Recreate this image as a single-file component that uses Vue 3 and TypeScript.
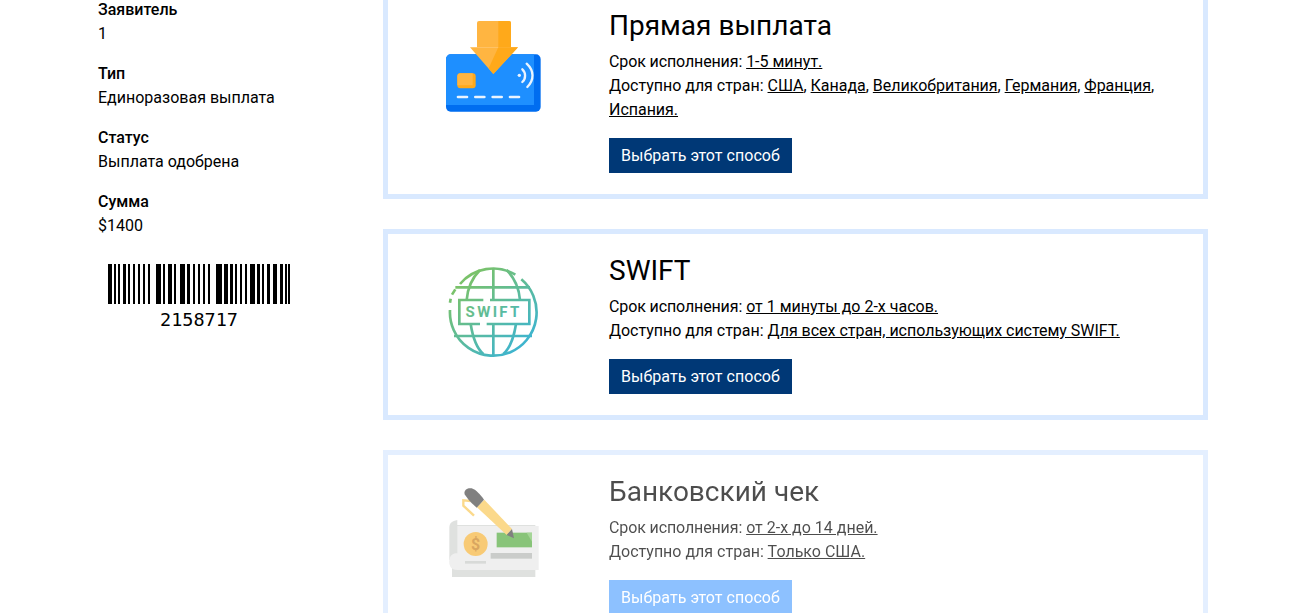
<script setup lang="ts">
interface Field {
  label: string
  value: string
}

const fields: Field[] = [
  { label: 'Заявитель', value: '1' },
  { label: 'Тип', value: 'Единоразовая выплата' },
  { label: 'Статус', value: 'Выплата одобрена' },
  { label: 'Сумма', value: '$1400' },
]

// barcode bars as [start, end] pixel columns
const bars: [number, number][] = [
  [0, 4], [6, 8], [10, 12], [15, 18], [20, 22], [25, 27], [30, 32], [35, 37], [40, 42],
  [48, 53], [55, 57], [60, 64], [66, 68], [72, 77], [79, 82], [85, 87], [90, 92], [95, 97],
  [100, 102], [108, 114], [116, 120], [122, 125], [127, 129], [132, 134], [137, 139],
  [142, 147], [149, 152], [154, 156], [159, 162], [165, 169], [172, 175], [177, 179], [180, 182],
]
const barcodeWidth = 182
</script>

<template>
  <div class="page">
    <aside class="sidebar">
      <div v-for="f in fields" :key="f.label" class="field">
        <div class="field-label">{{ f.label }}</div>
        <div class="field-value">{{ f.value }}</div>
      </div>
      <div class="barcode">
        <svg :width="barcodeWidth" height="40" :viewBox="`0 0 ${barcodeWidth} 40`" shape-rendering="crispEdges">
          <rect v-for="b in bars" :key="b[0]" :x="b[0]" y="0" :width="b[1] - b[0]" height="40" fill="#000" />
        </svg>
        <div class="barcode-text">2158717</div>
      </div>
    </aside>

    <main class="methods">
      <section class="method">
        <div class="method-icon">
          <svg width="130" height="130" viewBox="0 0 390 390">
            <rect x="48" y="163" width="284" height="172" rx="14" fill="#006df0" />
            <path d="M62 163H312V315H48V177a14 14 0 0 1 14-14z" fill="#1e8fff" />
            <rect x="82" y="220" width="55" height="45" rx="9" fill="#ffa91a" />
            <path d="M91 220H128V256H82V229a9 9 0 0 1 9-9z" fill="#ffb541" />
            <g fill="#eaf4ff">
              <rect x="80" y="287" width="35" height="8" rx="4" />
              <rect x="132" y="287" width="35" height="8" rx="4" />
              <rect x="184" y="287" width="35" height="8" rx="4" />
              <rect x="236" y="287" width="35" height="8" rx="4" />
              <circle cx="268" cy="226" r="5" />
            </g>
            <g fill="none" stroke="#eaf4ff" stroke-width="7" stroke-linecap="round">
              <path d="M277 208C288 218 288 236 277 246" />
              <path d="M290 191C313 212 313 240 292 261" />
            </g>
            <path d="M147 63H237a6 6 0 0 1 6 6V142H141V69a6 6 0 0 1 6-6z" fill="#ffb541" />
            <path d="M205 63H237a6 6 0 0 1 6 6V142H205z" fill="#ffa91a" />
            <path d="M120 142H264L190 222z" fill="#ffb541" />
            <path d="M205 142H264L190 222L176 205z" fill="#ffa91a" />
          </svg>
        </div>
        <div class="method-body">
          <h3 class="method-title">Прямая выплата</h3>
          <p class="method-line"><span class="term">Срок исполнения:</span> <a href="#">1-5 минут.</a></p>
          <p class="method-line method-line--tight">Доступно для стран: <a href="#">США</a>, <a href="#">Канада</a>, <a href="#">Великобритания</a>, <a href="#">Германия</a>, <a href="#">Франция</a>, <a href="#">Испания.</a></p>
          <button class="method-btn" type="button">Выбрать этот способ</button>
        </div>
      </section>

      <section class="method">
        <div class="method-icon">
          <svg width="130" height="130" viewBox="0 -15 390 390">
            <defs>
              <linearGradient id="swiftGrad" gradientUnits="userSpaceOnUse" x1="110" y1="90" x2="280" y2="290">
                <stop offset="0" stop-color="#7ac26a" />
                <stop offset="1" stop-color="#3db4d0" />
              </linearGradient>
            </defs>
            <g fill="none" stroke="url(#swiftGrad)" stroke-width="8">
              <path d="M256 74A130 130 0 0 0 90 102" />
              <path d="M76 118L66 134" />
              <path d="M62 146L60 158" />
              <path d="M60 180A130 130 0 1 0 274 88" />
              <path d="M190 55V150M190 222V315" />
              <path d="M150 60C120 90 112 125 110 150M230 60C260 90 268 125 270 150" />
              <path d="M122 222C128 260 140 295 160 312M258 222C252 260 240 295 220 312" />
              <path d="M76 112H300" />
              <path d="M72 258H306" />
              <path d="M160 150H88V222H150M170 222H298V150H180" />
            </g>
            <text x="191" y="201" class="swift-text" fill="url(#swiftGrad)" text-anchor="middle">SWIFT</text>
          </svg>
        </div>
        <div class="method-body">
          <h3 class="method-title">SWIFT</h3>
          <p class="method-line"><span class="term">Срок исполнения:</span> <a href="#">от 1 минуты до 2-х часов.</a></p>
          <p class="method-line method-line--tight">Доступно для стран: <a href="#">Для всех стран, использующих систему SWIFT.</a></p>
          <button class="method-btn" type="button">Выбрать этот способ</button>
        </div>
      </section>

      <section class="method method--disabled">
        <div class="method-icon">
          <svg width="130" height="130" viewBox="0 -27 390 390">
            <rect x="66" y="150" width="250" height="156" fill="#d2d4d2" />
            <path d="M82 135C66 138 58 145 58 158V255L82 240z" fill="#d2d4d2" />
            <path d="M82 153H326V285H82C62 285 56 270 58 255C60 240 70 235 82 235z" fill="#e8e8e8" />
            <rect x="200" y="173" width="106" height="44" fill="#55ab3f" />
            <path d="M290 173H306V200z" fill="#7fc46a" />
            <rect x="182" y="234" width="124" height="17" fill="#b4b6b4" />
            <rect x="105" y="258" width="63" height="8" fill="#c8cac8" />
            <circle cx="137" cy="207" r="36" fill="#f5b43a" />
            <text x="137" y="224" class="dollar-text" text-anchor="middle">$</text>
            <path d="M122 78L100 76V92L132 122" fill="none" stroke="#f9c95a" stroke-width="7" />
            <path d="M140 96L163 74L246 162L230 180z" fill="#f9c95a" />
            <path d="M230 180L246 162L252 190z" fill="#4a4a4a" />
            <path d="M104 58C100 46 112 37 125 40C138 44 150 58 162 74L140 98C128 88 112 72 104 58z" fill="#4a4a4a" />
          </svg>
        </div>
        <div class="method-body">
          <h3 class="method-title">Банковский чек</h3>
          <p class="method-line"><span class="term">Срок исполнения:</span> <a href="#">от 2-х до 14 дней.</a></p>
          <p class="method-line">Доступно для стран: <a href="#">Только США.</a></p>
          <button class="method-btn" type="button">Выбрать этот способ</button>
        </div>
      </section>
    </main>
  </div>
</template>

<style>
html,
body {
  overflow: hidden;
  background: #fff;
}
</style>

<style scoped>
.page {
  display: flex;
  align-items: flex-start;
  margin-top: -16px;
  padding-left: 98px;
  font-family: Roboto, "Noto Sans", sans-serif;
  font-size: 16px;
  line-height: 24px;
  color: #000;
}

.sidebar {
  width: 285px;
  flex: none;
  padding-top: 14px;
}

.field {
  margin-bottom: 16px;
}

.field-label {
  font-weight: 500;
}

.barcode {
  width: 202px;
  margin: 26px 0 0 0;
  padding-left: 10px;
  box-sizing: border-box;
}

.barcode svg {
  display: block;
}

.barcode-text {
  width: 182px;
  text-align: center;
  font-family: "DejaVu Sans Mono", monospace;
  font-size: 18.5px;
  line-height: 20px;
  margin-top: 6px;
}

.methods {
  width: 825px;
  flex: none;
}

.method {
  display: flex;
  border: 5px solid #d9e9ff;
  padding: 0 0 21px;
  margin-bottom: 30px;
}

.method-icon {
  width: 221px;
  flex: none;
  padding: 11px 0 0 42px;
  box-sizing: border-box;
}

.method-icon svg {
  display: block;
}

.method-body {
  flex: 1;
  padding: 20px 40px 0 0;
}

.method-title {
  margin: 0 0 7px;
  font-size: 28px;
  line-height: 34px;
  font-weight: 400;
}

.method-line {
  margin: 0;
}

.method-line--tight {
  letter-spacing: -0.02px;
}

.term {
  letter-spacing: -0.12px;
}

.method-line a {
  color: inherit;
  text-decoration: underline;
}

.method-btn {
  display: block;
  width: 183px;
  height: 35px;
  margin-top: 16px;
  padding: 0;
  border: 0;
  border-radius: 0;
  background: #003876;
  color: #fff;
  font-family: inherit;
  font-size: 16px;
  letter-spacing: 0.04px;
}

.method--disabled {
  opacity: 0.7;
}

.method--disabled .method-btn {
  background: #5ca6ff;
}

.swift-text {
  font-family: Roboto, sans-serif;
  font-weight: 700;
  font-size: 45px;
  letter-spacing: 7px;
}

.dollar-text {
  font-family: Roboto, sans-serif;
  font-weight: 700;
  font-size: 48px;
  fill: #c9801c;
}
</style>
